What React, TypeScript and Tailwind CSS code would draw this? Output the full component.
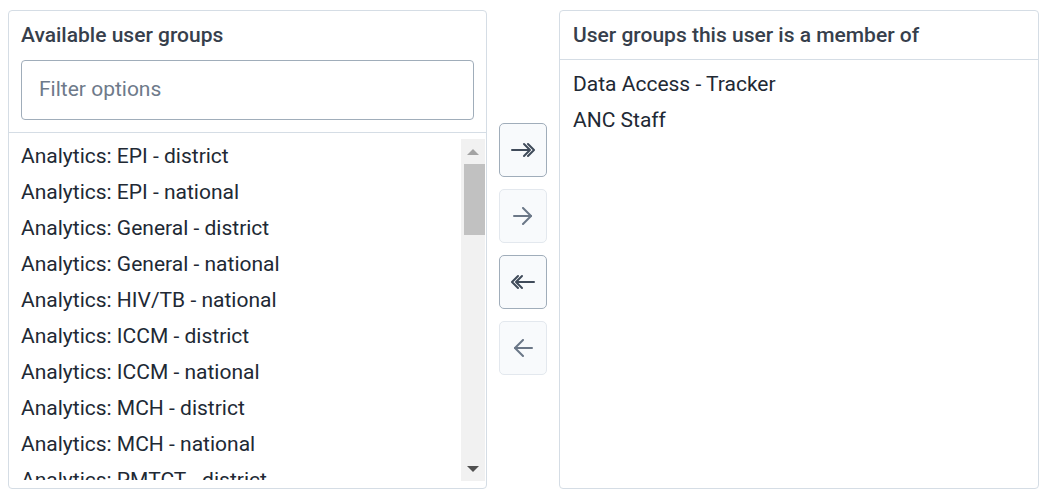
import React from 'react';

const available = [
  'Analytics: EPI - district',
  'Analytics: EPI - national',
  'Analytics: General - district',
  'Analytics: General - national',
  'Analytics: HIV/TB - national',
  'Analytics: ICCM - district',
  'Analytics: ICCM - national',
  'Analytics: MCH - district',
  'Analytics: MCH - national',
  'Analytics: PMTCT - district',
  'Analytics: PMTCT - national',
];

const selected = ['Data Access - Tracker', 'ANC Staff'];

function DoubleArrow({ left = false }: { left?: boolean }) {
  return (
    <svg
      width="24"
      height="16"
      viewBox="0 0 24 16"
      fill="none"
      stroke="currentColor"
      strokeWidth="2"
      strokeLinecap="round"
      strokeLinejoin="round"
      className={left ? 'rotate-180' : ''}
    >
      <path d="M1 8h17" />
      <path d="M13 2l6 6-6 6" />
      <path d="M17 2l6 6-6 6" />
    </svg>
  );
}

function SingleArrow({ left = false }: { left?: boolean }) {
  return (
    <svg
      width="20"
      height="18"
      viewBox="0 0 20 18"
      fill="none"
      stroke="currentColor"
      strokeWidth="2"
      strokeLinecap="round"
      strokeLinejoin="round"
      className={left ? 'rotate-180' : ''}
    >
      <path d="M1 9h17" />
      <path d="M10 1l8 8-8 8" />
    </svg>
  );
}

function MoveButton({ disabled, children }: { disabled?: boolean; children: React.ReactNode }) {
  return (
    <button
      className={`w-[48px] h-[54px] rounded-[5px] border bg-[#f8fafc] flex items-center justify-center ${
        disabled ? 'border-[#e3e8ee] text-[#6b7787]' : 'border-[#a0adba] text-[#404b5a]'
      }`}
    >
      {children}
    </button>
  );
}

function FakeScrollbar() {
  return (
    <div className="w-[24px] h-full bg-[#f1f1f1] flex flex-col items-center">
      <div className="h-[25px] w-full flex items-center justify-center">
        <div className="w-0 h-0 border-l-[6px] border-r-[6px] border-b-[6px] border-l-transparent border-r-transparent border-b-[#a3a3a3]" />
      </div>
      <div className="h-[71px] w-[21px] ml-[2px] bg-[#c1c1c1]" />
      <div className="flex-1" />
      <div className="h-[25px] w-full flex items-center justify-center">
        <div className="w-0 h-0 border-l-[6px] border-r-[6px] border-t-[6px] border-l-transparent border-r-transparent border-t-[#505050]" />
      </div>
    </div>
  );
}

export default function App() {
  return (
    <div
      className="w-[1055px] h-[504px] bg-white flex pl-[8px] pt-[10px] text-[#212934]"
      style={{ fontFamily: 'Roboto, "Liberation Sans", sans-serif' }}
    >
      {/* Available panel */}
      <div className="w-[479px] h-[479px] border border-[#d5dde5] rounded-[4px] flex flex-col">
        <div className="px-[12px] pt-[12px] pb-[12px] border-b border-[#d5dde5]">
          <div className="h-[24px] leading-[24px] text-[21px] font-medium text-[#373f4c]">Available user groups</div>
          <div className="mt-[13px] h-[60px] border border-[#a0adba] rounded-[4px] flex items-center px-[17px]">
            <span className="text-[21px] text-[#6e7a8a]">Filter options</span>
          </div>
        </div>
        <div className="flex-1 flex pt-[6px] pb-[8px] pr-[1px]">
          <div className="flex-1 h-[342px] overflow-hidden px-[12px] -mt-[1px]">
            {available.map((item) => (
              <div key={item} className="h-[36px] leading-[36px] text-[21px] whitespace-nowrap">
                {item}
              </div>
            ))}
          </div>
          <div className="h-[342px]">
            <FakeScrollbar />
          </div>
        </div>
      </div>

      {/* Transfer buttons */}
      <div className="w-[72px] flex flex-col items-center pt-[113px] gap-[12px]">
        <MoveButton>
          <DoubleArrow />
        </MoveButton>
        <MoveButton disabled>
          <SingleArrow />
        </MoveButton>
        <MoveButton>
          <DoubleArrow left />
        </MoveButton>
        <MoveButton disabled>
          <SingleArrow left />
        </MoveButton>
      </div>

      {/* Selected panel */}
      <div className="w-[480px] h-[479px] border border-[#d5dde5] rounded-[4px] flex flex-col">
        <div className="px-[13px] pt-[12px] pb-[12px] border-b border-[#d5dde5]">
          <div className="h-[24px] leading-[24px] text-[21px] font-medium text-[#373f4c]">
            User groups this user is a member of
          </div>
        </div>
        <div className="px-[13px] pt-[6px]">
          {selected.map((item) => (
            <div key={item} className="h-[36px] leading-[36px] text-[21px] whitespace-nowrap">
              {item}
            </div>
          ))}
        </div>
      </div>
    </div>
  );
}
